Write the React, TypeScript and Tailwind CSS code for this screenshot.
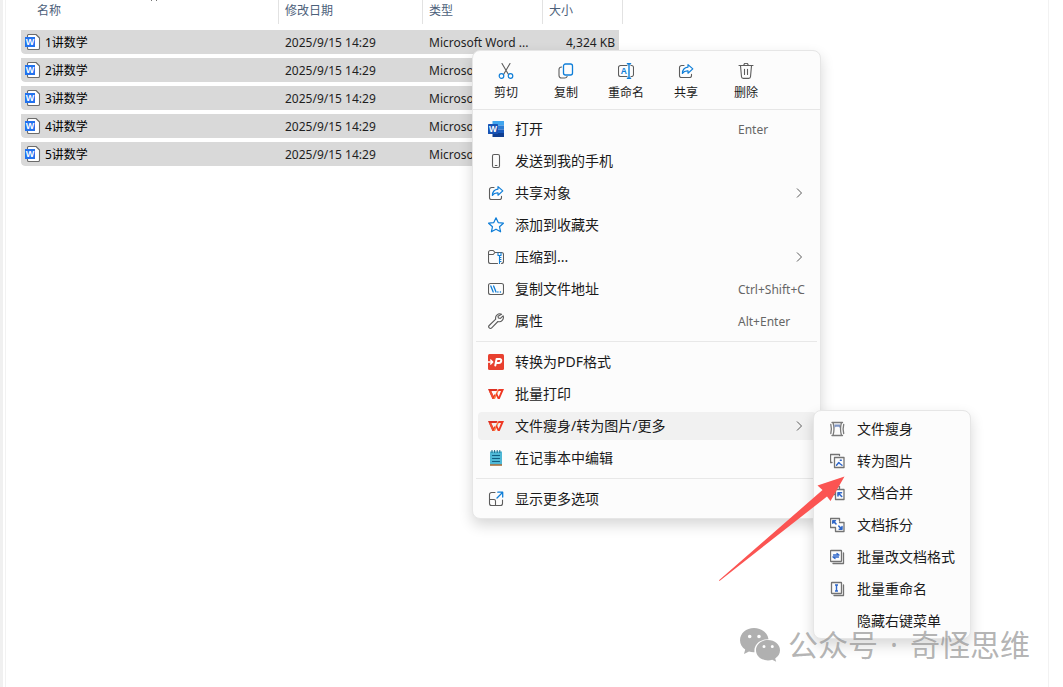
import type { ReactNode } from 'react'

// ─── Data ─────────────────────────────────────────────────────────────────────

interface FileRow {
  name: string
  modified: string
  type: string
  size: string
}

const files: FileRow[] = [1, 2, 3, 4, 5].map((n) => ({
  name: `${n}讲数学`,
  modified: '2025/9/15 14:29',
  type: 'Microsoft Word ...',
  size: n === 1 ? '4,324 KB' : '',
}))

// ─── Icons ────────────────────────────────────────────────────────────────────

const GRAY = '#5c5c5c'
const BLUE = '#0f7ed8'
const INK = '#2f67c9'

function Icon({ children, className = 'w-4 h-4' }: { children?: ReactNode; className?: string }) {
  return (
    <svg
      className={`${className} shrink-0`}
      viewBox="0 0 16 16"
      fill="none"
      strokeWidth={1.1}
      strokeLinecap="round"
      strokeLinejoin="round"
      aria-hidden="true"
    >
      {children}
    </svg>
  )
}

function Letter({ x, y, size, fill, children }: { x: number; y: number; size: number; fill: string; children: string }) {
  return (
    <text x={x} y={y} fontSize={size} fontWeight={700} fill={fill} textAnchor="middle" fontFamily="Liberation Sans, sans-serif">
      {children}
    </text>
  )
}

const DocIcon = () => (
  <Icon>
    <path d="M2.500 1.700A1.200 1.200 0 0 1 3.700.5H11L14.500 4v10.300a1.200 1.200 0 0 1-1.200 1.200H3.700a1.200 1.200 0 0 1-1.200-1.200z" fill="#fff" stroke="#6b6b6b" />
    <rect x="0" y="3" width="10" height="10" fill="#2272ee" />
    <Letter x={5} y={11} size={9} fill="#fff">W</Letter>
  </Icon>
)

const CutIcon = () => (
  <Icon>
    <path d="M4 .5l6.300 10.700M12 .5L5.700 11.200" stroke={GRAY} />
    <circle cx="3.500" cy="13" r="2.300" stroke={BLUE} strokeWidth={1.200} />
    <circle cx="12.500" cy="13" r="2.300" stroke={BLUE} strokeWidth={1.200} />
  </Icon>
)

const CopyIcon = () => (
  <Icon>
    <path d="M3.600 4a2.500 2.500 0 0 0-2.600 2.500v6a2.500 2.500 0 0 0 2.500 2.500h3.300a2.500 2.500 0 0 0 2.300-1.500" stroke={GRAY} />
    <rect x="5.500" y="1" width="9" height="11" rx="2" stroke={BLUE} strokeWidth={1.3} />
  </Icon>
)

const RenameIcon = () => (
  <Icon>
    <path d="M9 2.500H2.500a2 2 0 0 0-2 2v7a2 2 0 0 0 2 2H9M13 2.500a2 2 0 0 1 2.500 2v7a2 2 0 0 1-2.500 2" stroke={GRAY} />
    <path d="M11 .8v14.400M9.400.8h3.200M9.400 15.200h3.200" stroke={BLUE} strokeWidth={1.4} />
    <Letter x={5.8} y={11} size={8.5} fill={BLUE}>A</Letter>
  </Icon>
)

const ShareIcon = () => (
  <Icon>
    <path d="M6 2.500H3.600A2.100 2.100 0 0 0 1.500 4.600v7.800a2.100 2.100 0 0 0 2.100 2.100h7.800a2.100 2.100 0 0 0 2.100-2.100v-1" stroke={GRAY} />
    <path d="M10 1.600l4.800 4.300L10 10.200V7.800c-2.600-.2-4.300.7-5.600 2.600.1-3.700 2.200-6 5.600-6.300z" stroke={BLUE} strokeWidth={1.2} />
  </Icon>
)

const TrashIcon = () => (
  <Icon>
    <path d="M1 2.500h14M5.800 2.400a2.200 2.200 0 0 1 4.400 0M2.500 2.800l1 11a1.700 1.700 0 0 0 1.700 1.600h5.600a1.700 1.700 0 0 0 1.700-1.600l1-11M6.500 6.200v5.300M9.500 6.200v5.300" stroke={GRAY} />
  </Icon>
)

const WordIcon = () => (
  <Icon>
    <path d="M4.500 0H16V4.500H4.500z" fill="#41a5ee" />
    <path d="M4.500 4.500H16v4H4.500z" fill="#2b7cd3" />
    <path d="M4.500 8.500H16V12H4.500z" fill="#185abd" />
    <path d="M4.500 12H16v4H4.500z" fill="#103f91" />
    <rect x="0" y="3" width="10" height="10" rx="0.600" fill="#1853b4" />
    <Letter x={5} y={11} size={8.500} fill="#fff">W</Letter>
  </Icon>
)

const PhoneIcon = () => (
  <Icon>
    <rect x="4.500" y="1.500" width="7" height="13" rx="1.500" stroke={GRAY} />
    <path d="M7.300 12.500h1.600" stroke={GRAY} />
  </Icon>
)

const StarIcon = () => (
  <Icon>
    <path d="M8 .8l2.200 4.800 5.200.6-3.900 3.500 1.100 5.100L8 12.200l-4.600 2.600 1.100-5.100L.6 6.200l5.200-.6z" stroke={BLUE} strokeWidth={1.2} />
  </Icon>
)

const ZipIcon = () => (
  <Icon>
    <path d="M9.500 14.500H2.500a2 2 0 0 1-2-2V3.500a2 2 0 0 1 2-2h2.700l1.800 2h6.500a2 2 0 0 1 2 2v7a2 2 0 0 1-2 2M.5 5.500h4.700L7 3.500" stroke={GRAY} />
    <path d="M10 3.800v2.700h3V3.800M11.500 6.500v8M11.500 8.500h1.500M11.500 10.500h1.500M11.500 12.500h1.500" stroke={BLUE} />
  </Icon>
)

const PathIcon = () => (
  <Icon>
    <rect x="0.500" y="2.500" width="15" height="11" rx="2" stroke={GRAY} />
    <path d="M2.800 5l2.400 6M5.600 5L8 11M9.800 11h.2M12.300 11h.2" stroke={BLUE} strokeWidth={1.3} />
  </Icon>
)

const WrenchIcon = () => (
  <Icon>
    <path d="M13.600 1.200a4.300 4.300 0 0 0-5.900 5L1.200 12.500a1.700 1.700 0 0 0 2.500 2.400l6.200-6.400a4.300 4.300 0 0 0 5.200-5.700l-2.700 2.600-2-.4-.4-1.700z" stroke={GRAY} />
  </Icon>
)

const PdfIcon = () => (
  <Icon>
    <rect width="16" height="16" rx="1.500" fill="#e8402f" />
    <path d="M0 8h4.300M2.700 6l2 2-2 2" stroke="#fff" strokeWidth={1.4} />
    <path d="M7.300 11.500L8.600 5H12a1.500 1.500 0 0 1 1.200 2c-.3 1.400-1 2-2.300 2H8.500" stroke="#fff" strokeWidth={2} />
  </Icon>
)

const WpsIcon = () => (
  <Icon>
    <path d="M0 3h9.500L8.600 5H3.200l2.300 5 1-1.900 1.200 2.300L6.200 13H4.400z" fill="#dc3023" />
    <path d="M3.200 5L5.500 10 4.800 13 1 5z" fill="#f4502f" />
    <path d="M5.200 13L9.700 3.500l.8 2L7 13z" fill="#ff8040" />
    <path d="M10.500 3H16l-4.300 10H9.800L7.800 8.800l.9-2 2 3.900L13 5H9.700z" fill="#ef3824" />
  </Icon>
)

const NotepadIcon = () => (
  <Icon>
    <rect x="2" y="1.500" width="12" height="13.500" fill="#4fb8d6" />
    <rect x="2" y="14.200" width="12" height="1.600" fill="#a7713f" />
    <path d="M4 .5v2M6.600.5v2M9.200.5v2M11.800.5v2" stroke="#1c6e8c" />
    <path d="M4.500 5.500h7M4.500 8.500h7M4.500 11.500h7" stroke="#115d80" strokeWidth={1.2} />
  </Icon>
)

const MoreIcon = () => (
  <Icon>
    <path d="M7 1.500H3.500a2 2 0 0 0-2 2V7M1.500 8.500H6a1.500 1.500 0 0 1 1.500 1.500v4.500M1.500 7v5.500a2 2 0 0 0 2 2h9a2 2 0 0 0 2-2V9" stroke={GRAY} />
    <path d="M9 7l5.500-5.500M9.800 1.200h4.900v4.900" stroke={BLUE} strokeWidth={1.3} />
  </Icon>
)

const SlimIcon = () => (
  <Icon>
    <path d="M2 1.500h10.500M2 14.500h10.500M3 1.500c1.200 4 1.200 9 0 13M11.500 1.500c-1.200 4-1.200 9 0 13M.8 3.500c.8 3 .8 6 0 9M13.700 3.500c-.8 3-.8 6 0 9" stroke="#7b7b7b" strokeWidth={1.3} />
    <path d="M4.500 3.500h5.500v3.500l-1.200-1.200H5.700L4.500 7z" fill="#7f95c4" />
  </Icon>
)

const ToImageIcon = () => (
  <Icon>
    <path d="M.5 9.500v-8h9M.5 9.500h1.500M9.500 1.500v1" stroke="#737373" strokeWidth={1.3} />
    <rect x="4.500" y="4.500" width="9.500" height="10" fill="#fcfcfc" stroke="#737373" strokeWidth={1.3} />
    <path d="M6.500 12.300l2.300-2.800 1.200 1.200 2 1.600M10.300 7.300h1" stroke={INK} strokeWidth={1.4} />
  </Icon>
)

const MergeIcon = () => (
  <Icon>
    <path d="M4.500 9.500h-4v-8h9v3" stroke="#737373" strokeWidth={1.3} />
    <rect x="5.500" y="4.500" width="8.500" height="10" fill="#fcfcfc" stroke="#737373" strokeWidth={1.3} />
    <path d="M8 11V7.800h3.500M8 7.800l3.700 3.700" stroke={INK} strokeWidth={1.6} />
  </Icon>
)

const SplitIcon = () => (
  <Icon>
    <path d="M5 10.500H.5v-9h9v2.500" stroke="#737373" strokeWidth={1.3} />
    <path d="M9.500 5.500H14v9H5.500v-4" stroke="#737373" strokeWidth={1.3} />
    <path d="M2.800 6.200V3.700h2.700M3 3.900l3 3M12 9.500v2.800H9.200M11.800 12.100l-3-3" stroke={INK} strokeWidth={1.5} />
  </Icon>
)

const FormatIcon = () => (
  <Icon>
    <path d="M13.500 4v10.500H3" stroke="#737373" strokeWidth={1.3} />
    <rect x="0.500" y="1.500" width="11" height="11" rx="0.500" stroke="#737373" strokeWidth={1.3} />
    <path d="M3.500 6h5.500M3 8h5.500M7 4.500L9 6M3 8l2 1.500" stroke={INK} strokeWidth={1.3} />
  </Icon>
)

const BatchRenameIcon = () => (
  <Icon>
    <path d="M13.500 4v10.500H4" stroke="#737373" strokeWidth={1.3} />
    <rect x="1.500" y="1.500" width="10" height="11" rx="0.500" stroke="#737373" strokeWidth={1.3} />
    <path d="M6.500 4v6M5 4h3M5 10h3" stroke={INK} strokeWidth={1.4} strokeLinecap="butt" />
  </Icon>
)

const Chevron = () => (
  <svg className="w-2 h-3" viewBox="0 0 8 12" fill="none" stroke="#5a5a5a" aria-hidden="true">
    <path d="M1 1.500L5.500 6 1 10.500" />
  </svg>
)

// ─── Menu parts ───────────────────────────────────────────────────────────────

interface MenuItem {
  label: string
  icon: ReactNode
  shortcut?: string
  hasSubmenu?: boolean
  active?: boolean
}

const toolbar: MenuItem[] = [
  { label: '剪切', icon: <CutIcon /> },
  { label: '复制', icon: <CopyIcon /> },
  { label: '重命名', icon: <RenameIcon /> },
  { label: '共享', icon: <ShareIcon /> },
  { label: '删除', icon: <TrashIcon /> },
]

const groups: MenuItem[][] = [
  [
    { label: '打开', icon: <WordIcon />, shortcut: 'Enter' },
    { label: '发送到我的手机', icon: <PhoneIcon /> },
    { label: '共享对象', icon: <ShareIcon />, hasSubmenu: true },
    { label: '添加到收藏夹', icon: <StarIcon /> },
    { label: '压缩到...', icon: <ZipIcon />, hasSubmenu: true },
    { label: '复制文件地址', icon: <PathIcon />, shortcut: 'Ctrl+Shift+C' },
    { label: '属性', icon: <WrenchIcon />, shortcut: 'Alt+Enter' },
  ],
  [
    { label: '转换为PDF格式', icon: <PdfIcon /> },
    { label: '批量打印', icon: <WpsIcon /> },
    { label: '文件瘦身/转为图片/更多', icon: <WpsIcon />, hasSubmenu: true, active: true },
    { label: '在记事本中编辑', icon: <NotepadIcon /> },
  ],
  [{ label: '显示更多选项', icon: <MoreIcon /> }],
]

const submenu: MenuItem[] = [
  { label: '文件瘦身', icon: <SlimIcon /> },
  { label: '转为图片', icon: <ToImageIcon /> },
  { label: '文档合并', icon: <MergeIcon /> },
  { label: '文档拆分', icon: <SplitIcon /> },
  { label: '批量改文档格式', icon: <FormatIcon /> },
  { label: '批量重命名', icon: <BatchRenameIcon /> },
  { label: '隐藏右键菜单', icon: <Icon /> },
]

function MenuButton({ item }: { item: MenuItem }) {
  return (
    <button
      type="button"
      role="menuitem"
      className={`flex items-center w-full h-7 my-0.5 pl-[10px] pr-3 gap-[11px] rounded text-left text-sm leading-5 whitespace-nowrap ${item.active ? 'bg-[#f1f1f1]' : ''}`}
    >
      {item.icon}
      <span className="flex-1">{item.label}</span>
      {item.shortcut && <span className="w-[66px] pt-0.5 text-xs leading-5 text-[#666]">{item.shortcut}</span>}
      {item.hasSubmenu && <Chevron />}
    </button>
  )
}

function ContextMenu() {
  return (
    <div
      role="menu"
      className="absolute left-[472px] top-[50px] w-[349px] rounded-lg border border-[#e6e6e6] bg-[#fcfcfc] pb-[3px] shadow-[0_6px_14px_rgba(0,0,0,0.16)]"
    >
      <div className="flex h-[59px] pl-[3px] border-b border-[#e6e6e6]">
        {toolbar.map((item) => (
          <button key={item.label} type="button" role="menuitem" className="flex flex-col items-center w-[60px] pt-3 gap-1 text-xs leading-5">
            {item.icon}
            <span>{item.label}</span>
          </button>
        ))}
      </div>
      <div className="pt-[3px]">
        {groups.map((group, i) => (
          <div key={i}>
            {i > 0 && <hr className="mx-[3px] my-1 border-[#e8e8e8]" />}
            <div className="flow-root pl-[5px] pr-1">
              {group.map((item) => (
                <div key={item.label} className="flow-root">
                  <MenuButton item={item} />
                </div>
              ))}
            </div>
          </div>
        ))}
      </div>
    </div>
  )
}

function SubMenu() {
  return (
    <div
      role="menu"
      className="absolute left-[813px] top-[410px] w-[158px] rounded-lg border border-[#e6e6e6] bg-[#fcfcfc] pl-1.5 pr-1 pt-0.5 pb-px shadow-[0_6px_14px_rgba(0,0,0,0.16)]"
    >
      {submenu.map((item) => (
        <div key={item.label} className="flow-root">
          <MenuButton item={item} />
        </div>
      ))}
    </div>
  )
}

// ─── File list ────────────────────────────────────────────────────────────────

const columns = [
  { label: '名称', width: 'w-[258px]', pad: 'pl-4' },
  { label: '修改日期', width: 'w-[144px]', pad: 'pl-1.5' },
  { label: '类型', width: 'w-[120px]', pad: 'pl-1.5' },
  { label: '大小', width: 'w-20', pad: 'pl-1.5' },
]

const cell = 'h-7 p-0 border-t-4 border-transparent bg-clip-padding bg-[#d9d9d9] whitespace-nowrap overflow-hidden'

function FileTable() {
  return (
    <table className="table-fixed w-[602px] ml-[15px] border-separate border-spacing-0 text-xs leading-5 text-[#1f1f1f]">
      <thead>
        <tr>
          {columns.map((col) => (
            <th key={col.label} className={`${col.width} p-0 pb-0.5 text-left font-normal text-[#4c607a]`}>
              <div className={`h-6 pt-px border-r border-[#e2e2e2] ${col.pad}`}>{col.label}</div>
            </th>
          ))}
        </tr>
      </thead>
      <tbody>
        {files.map((file) => (
          <tr key={file.name}>
            <td className={`${cell} rounded-bl-sm`}>
              <div className="flex items-center gap-1 pl-1 text-black">
                <DocIcon />
                <span className="pt-0.5">{file.name}</span>
              </div>
            </td>
            <td className={`${cell} pl-1.5 pt-0.5`}>{file.modified}</td>
            <td className={`${cell} pl-1.5 pt-0.5`}>{file.type}</td>
            <td className={`${cell} border-r-4 pr-1 pt-0.5 text-right`}>{file.size}</td>
          </tr>
        ))}
      </tbody>
    </table>
  )
}

// ─── Overlays ─────────────────────────────────────────────────────────────────

function Arrow() {
  return (
    <svg className="absolute left-[718px] top-[476px] w-[128px] h-[106px] pointer-events-none" viewBox="718 476 128 106" aria-hidden="true">
      <path d="M844.500 476.500L817.500 485.500 822.500 490 719 580.300 719.500 581 827 496.500 830.500 501z" fill="#fb5452" />
    </svg>
  )
}

function Watermark() {
  return (
    <div className="absolute right-[33px] bottom-[22px] flex items-center gap-2 text-[#8a8a8a]/65 pointer-events-none">
      <svg className="w-10 h-[34px]" viewBox="0 0 40 34" aria-hidden="true">
        <path
          fill="#b0b0b0"
          fillRule="evenodd"
          d="M14 0C6.200 0 0 5.400 0 12.200c0 3.800 2 7.100 5.200 9.300L4 26l5-2.500c1.700.5 3.400.8 5.500.7C13.500 16.500 20 11 28.500 11.200 27.500 4.800 21.500 0 14 0zM9.700 6.700a1.800 1.800 0 1 1 0 3.600 1.800 1.800 0 0 1 0-3.600zm9.300 0a1.800 1.800 0 1 1 0 3.600 1.800 1.800 0 0 1 0-3.600z"
        />
        <path
          fill="#b0b0b0"
          fillRule="evenodd"
          d="M28 12c-6.700 0-12 4.500-12 10.200s5.300 10.200 12 10.200c1.500 0 2.900-.2 4.200-.6l4 2-1-3.400c3-1.900 4.800-4.800 4.800-8.200C40 16.500 34.700 12 28 12zm-4 5a1.500 1.500 0 1 1 0 3 1.500 1.500 0 0 1 0-3zm8.300 0a1.500 1.500 0 1 1 0 3 1.500 1.500 0 0 1 0-3z"
        />
      </svg>
      <p className="flex gap-3 text-[30px] leading-10 whitespace-nowrap">
        <span>公众号</span>
        <span>·</span>
        <span>奇怪思维</span>
      </p>
    </div>
  )
}

// ─── Page ─────────────────────────────────────────────────────────────────────

export default function App() {
  return (
    <div className="relative flex min-h-screen overflow-hidden bg-white text-[#1a1a1a] font-['Noto_Sans','Noto_Sans_CJK_SC',sans-serif]">
      <div className="w-[3px] shrink-0 bg-[#f0f0f0]" />
      <main className="flex-1 min-w-0 ml-0.5 mr-[14px] border-x border-[#f2f2f2]">
        <FileTable />
      </main>
      <svg className="absolute left-[150px] top-0 w-2 h-1" viewBox="0 0 8 4" fill="none" stroke="#777" aria-hidden="true">
        <path d="M1 1L4-2 7 1" />
      </svg>
      <ContextMenu />
      <SubMenu />
      <Arrow />
      <Watermark />
    </div>
  )
}
